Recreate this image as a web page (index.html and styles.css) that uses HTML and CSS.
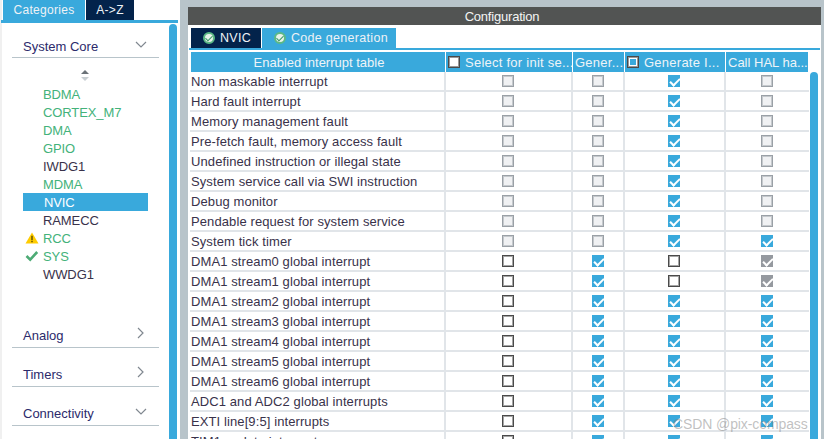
FILE: index.html
```html
<!DOCTYPE html>
<html lang="en">
<head>
<meta charset="utf-8">
<title>Configuration</title>
<link rel="stylesheet" href="styles.css">
</head>
<body>
<div class="app">
  <aside class="side">
    <div class="side-tabs">
      <div class="side-tab active">Categories</div>
      <div class="side-tab">A-&gt;Z</div>
    </div>
    <div class="side-body">
      <div class="side-content">
        <div class="group first"><span>System Core</span>
          <svg class="chev" width="12" height="8" viewBox="0 0 12 8"><path d="M1 1l5 5 5-5"/></svg>
        </div>
        <div class="sort">
          <svg width="10" height="13" viewBox="0 0 10 13"><path class="up" d="M5 1l4 4H1z"/><path class="down" d="M1 8h8l-4 4z"/></svg>
        </div>
        <ul class="list">
          <li class="ok">BDMA</li>
          <li class="ok">CORTEX_M7</li>
          <li class="ok">DMA</li>
          <li class="ok">GPIO</li>
          <li>IWDG1</li>
          <li class="ok">MDMA</li>
          <li class="sel">NVIC</li>
          <li>RAMECC</li>
          <li class="ok"><svg class="mark" width="14" height="12" viewBox="0 0 14 12"><path fill="#ffcc00" d="M7 .5l6.5 11H.5z"/><path fill="#5a4a00" d="M6.3 3.8h1.4v4.2H6.3zM6.3 8.8h1.4v1.4H6.3z"/></svg>RCC</li>
          <li class="ok"><svg class="mark" width="14" height="12" viewBox="0 0 14 12"><path fill="none" stroke="#4dab75" stroke-width="2.6" d="M1.5 6l3.7 3.6 7-7.6"/></svg>SYS</li>
          <li>WWDG1</li>
        </ul>
        <div class="group analog"><span>Analog</span>
          <svg class="chev side-arrow" width="8" height="12" viewBox="0 0 8 12"><path d="M1 1l5 5-5 5"/></svg>
        </div>
        <div class="group"><span>Timers</span>
          <svg class="chev side-arrow" width="8" height="12" viewBox="0 0 8 12"><path d="M1 1l5 5-5 5"/></svg>
        </div>
        <div class="group"><span>Connectivity</span>
          <svg class="chev" width="12" height="8" viewBox="0 0 12 8"><path d="M1 1l5 5 5-5"/></svg>
        </div>
      </div>
      <div class="vbar"></div>
    </div>
  </aside>

  <main class="panel">
    <header class="panel-head">Configuration</header>
    <div class="tabs">
      <div class="tab dark"><span class="tick"></span>NVIC</div>
      <div class="tab light"><span class="tick"></span>Code generation</div>
    </div>
    <div class="table-wrap">
      <div class="table">
        <div class="row head">
          <div class="th name">Enabled interrupt table</div>
          <div class="th"><span class="hbox"></span>Select for init se...</div>
          <div class="th tight">Gener...</div>
          <div class="th"><span class="hbox mixed"></span>Generate I...</div>
          <div class="th tight">Call HAL ha...</div>
        </div>
        <div class="row"><div class="td name">Non maskable interrupt</div><div class="td"><i class="cb dis"></i></div><div class="td"><i class="cb dis"></i></div><div class="td"><i class="cb on"></i></div><div class="td"><i class="cb dis"></i></div></div>
        <div class="row"><div class="td name">Hard fault interrupt</div><div class="td"><i class="cb dis"></i></div><div class="td"><i class="cb dis"></i></div><div class="td"><i class="cb on"></i></div><div class="td"><i class="cb dis"></i></div></div>
        <div class="row"><div class="td name">Memory management fault</div><div class="td"><i class="cb dis"></i></div><div class="td"><i class="cb dis"></i></div><div class="td"><i class="cb on"></i></div><div class="td"><i class="cb dis"></i></div></div>
        <div class="row"><div class="td name">Pre-fetch fault, memory access fault</div><div class="td"><i class="cb dis"></i></div><div class="td"><i class="cb dis"></i></div><div class="td"><i class="cb on"></i></div><div class="td"><i class="cb dis"></i></div></div>
        <div class="row"><div class="td name">Undefined instruction or illegal state</div><div class="td"><i class="cb dis"></i></div><div class="td"><i class="cb dis"></i></div><div class="td"><i class="cb on"></i></div><div class="td"><i class="cb dis"></i></div></div>
        <div class="row"><div class="td name">System service call via SWI instruction</div><div class="td"><i class="cb dis"></i></div><div class="td"><i class="cb dis"></i></div><div class="td"><i class="cb on"></i></div><div class="td"><i class="cb dis"></i></div></div>
        <div class="row"><div class="td name">Debug monitor</div><div class="td"><i class="cb dis"></i></div><div class="td"><i class="cb dis"></i></div><div class="td"><i class="cb on"></i></div><div class="td"><i class="cb dis"></i></div></div>
        <div class="row"><div class="td name">Pendable request for system service</div><div class="td"><i class="cb dis"></i></div><div class="td"><i class="cb dis"></i></div><div class="td"><i class="cb on"></i></div><div class="td"><i class="cb dis"></i></div></div>
        <div class="row"><div class="td name">System tick timer</div><div class="td"><i class="cb dis"></i></div><div class="td"><i class="cb dis"></i></div><div class="td"><i class="cb on"></i></div><div class="td"><i class="cb on"></i></div></div>
        <div class="row"><div class="td name">DMA1 stream0 global interrupt</div><div class="td"><i class="cb"></i></div><div class="td"><i class="cb on"></i></div><div class="td"><i class="cb"></i></div><div class="td"><i class="cb grey"></i></div></div>
        <div class="row"><div class="td name">DMA1 stream1 global interrupt</div><div class="td"><i class="cb"></i></div><div class="td"><i class="cb on"></i></div><div class="td"><i class="cb"></i></div><div class="td"><i class="cb grey"></i></div></div>
        <div class="row"><div class="td name">DMA1 stream2 global interrupt</div><div class="td"><i class="cb"></i></div><div class="td"><i class="cb on"></i></div><div class="td"><i class="cb on"></i></div><div class="td"><i class="cb on"></i></div></div>
        <div class="row"><div class="td name">DMA1 stream3 global interrupt</div><div class="td"><i class="cb"></i></div><div class="td"><i class="cb on"></i></div><div class="td"><i class="cb on"></i></div><div class="td"><i class="cb on"></i></div></div>
        <div class="row"><div class="td name">DMA1 stream4 global interrupt</div><div class="td"><i class="cb"></i></div><div class="td"><i class="cb on"></i></div><div class="td"><i class="cb on"></i></div><div class="td"><i class="cb on"></i></div></div>
        <div class="row"><div class="td name">DMA1 stream5 global interrupt</div><div class="td"><i class="cb"></i></div><div class="td"><i class="cb on"></i></div><div class="td"><i class="cb on"></i></div><div class="td"><i class="cb on"></i></div></div>
        <div class="row"><div class="td name">DMA1 stream6 global interrupt</div><div class="td"><i class="cb"></i></div><div class="td"><i class="cb on"></i></div><div class="td"><i class="cb on"></i></div><div class="td"><i class="cb on"></i></div></div>
        <div class="row"><div class="td name">ADC1 and ADC2 global interrupts</div><div class="td"><i class="cb"></i></div><div class="td"><i class="cb on"></i></div><div class="td"><i class="cb on"></i></div><div class="td"><i class="cb on"></i></div></div>
        <div class="row"><div class="td name">EXTI line[9:5] interrupts</div><div class="td"><i class="cb"></i></div><div class="td"><i class="cb on"></i></div><div class="td"><i class="cb on"></i></div><div class="td"><i class="cb on"></i></div></div>
        <div class="row"><div class="td name">TIM1 update interrupt</div><div class="td"><i class="cb"></i></div><div class="td"><i class="cb on"></i></div><div class="td"><i class="cb on"></i></div><div class="td"><i class="cb on"></i></div></div>
      </div>
      <div class="vbar table-bar"></div>
    </div>
    <div class="watermark">CSDN @pix-compass</div>
  </main>
</div>
</body>
</html>
```

FILE: styles.css
```css
* { box-sizing: border-box; }
html, body { margin: 0; height: 439px; overflow: hidden; }
body { font-family: "Liberation Sans", Arial, sans-serif; font-size: 13px; color: #39324a; background: #fff; }

.app { display: flex; height: 439px; overflow: hidden; background: #b8c4ca; }

/* Left column */
.side { width: 180px; flex: none; background: #fff; border-left: 2px solid #f0f0f0; display: flex; flex-direction: column; margin-right: 8px; }
.side-tabs { display: flex; height: 20px; padding-left: 1px; gap: 1px; flex: none; }
.side-tab { height: 20px; background: #03234b; color: #eef2f6; line-height: 20px; text-align: center; letter-spacing: .3px; width: 48px; font-size: 12px; }
.side-tab.active { background: #39a9dc; width: 82px; }
.side-body { border-top: 3px solid #39a9dc; margin-left: -1px; margin-right: 2px; display: flex; flex: 1; min-height: 0; }
.side-content { width: 168px; flex: none; padding: 0 10px 0 11px; }
.vbar { width: 8px; flex: none; background: #39a9dc; border-radius: 4px 4px 0 0; margin-top: 1px; }

.group { display: flex; justify-content: space-between; align-items: center; height: 39px; padding: 14px 12px 0 11px; border-bottom: 1px solid #b8c4ca; color: #2c2a6b; font-size: 13px; }
.group.first { height: 35px; padding-top: 13px; }
.group.analog { margin-top: 26px; }
.chev { fill: none; stroke: #808890; stroke-width: 1.2; margin-top: -3px; flex: none; }
.side-arrow { margin-right: 2px; margin-top: -5px; }

.sort { display: flex; justify-content: center; padding-top: 11px; height: 27px; margin-left: -2px; }
.up { fill: #6b7278; }
.down { fill: #c8ced2; }

.list { list-style: none; margin: 0; padding: 0; font-size: 13px; letter-spacing: -.1px; }
.list li { height: 18px; line-height: 20px; padding-left: 31px; position: relative; }
.list li.ok { color: #43b27a; }
.list li.sel { background: #39a9dc; color: #fff; margin: 0 11px; padding-left: 21px; }
.mark { position: absolute; left: 13px; top: 3px; }

/* Right panel */
.panel { width: 633px; flex: none; position: relative; margin-top: 7px; background: #fff; height: 432px; }
.panel-head { height: 18px; background: #525453; color: #f4f4f4; text-align: center; line-height: 19px; font-size: 13px; letter-spacing: -.2px; padding-right: 5px; }
.tabs { display: flex; gap: 1px; height: 25px; padding: 3px 0 0 2px; border-bottom: 2px solid #39a9dc; margin: 0 1px; }
.tab { height: 20px; display: flex; align-items: center; color: #eef2f6; letter-spacing: .3px; font-size: 12.5px; white-space: nowrap; }
.tab.dark { background: #03234b; width: 70px; padding-left: 12px; }
.tab.light { background: #39a9dc; width: 134px; padding-left: 12px; }
.tick { width: 12px; height: 12px; border-radius: 50%; background: #e8f3ea; border: 2px solid #5cb985; margin-right: 5px; position: relative; flex: none; }
.tick::after { content: ""; position: absolute; left: 2px; top: 0; width: 3px; height: 6px; border-right: 1.5px solid #3e9a69; border-bottom: 1.5px solid #3e9a69; transform: rotate(45deg); }

.table-wrap { display: flex; padding: 2px 0 0 2px; }
.table { width: 619px; flex: none; }
.row { display: grid; grid-template-columns: 256px 127px 52px 101px 83px; height: 20px; border-bottom: 2px solid #e1e5e9; }
.row.head { border-bottom: 0; }
.td { display: flex; align-items: center; justify-content: center; border-right: 2px solid #e1e5e9; height: 18px; }
.td:last-child { border-right: 0; }
.td.name { justify-content: flex-start; padding-left: 1px; letter-spacing: .1px; white-space: nowrap; }
.th { background: #39a9dc; color: #eef4f8; display: flex; align-items: center; height: 20px; padding-left: 2px; border-right: 1px solid #fff; letter-spacing: .25px; white-space: nowrap; overflow: hidden; font-size: 13px; }
.th.name { justify-content: center; margin-left: 1px; letter-spacing: 0; }
.th:last-child { letter-spacing: 0; padding-left: 2px; }
.hbox { width: 12px; height: 12px; background: #fff; border: 1px solid #4a4a4a; box-shadow: inset 0 0 0 1px #999; margin-right: 5px; flex: none; position: relative; }
.hbox.mixed::after { content: ""; position: absolute; left: 2px; top: 2px; width: 6px; height: 6px; background: #39a9dc; }

.cb { display: block; width: 12px; height: 12px; margin-left: -1px; border: 1px solid #4a4a4a; box-shadow: inset 0 0 0 1px #a5a5a5; background: #fff; position: relative; }
.cb.dis { border-color: #9aa0a6; box-shadow: inset 0 0 0 1px #c5c9cd; background: #f0f1f3; }
.cb.on { background: #39a9dc; border-color: #39a9dc; box-shadow: none; }
.cb.grey { background: #95999f; border-color: #95999f; box-shadow: none; }
.cb.on::after, .cb.grey::after { content: ""; position: absolute; left: 3px; top: 0; width: 4px; height: 8px; border-right: 2px solid #fff; border-bottom: 2px solid #fff; transform: rotate(45deg); }

.table-bar { margin-left: 1px; margin-top: 20px; }

.watermark { position: absolute; left: 485px; top: 409px; color: rgba(130,130,130,.5); font-size: 14px; letter-spacing: -.1px; white-space: nowrap; }
```
